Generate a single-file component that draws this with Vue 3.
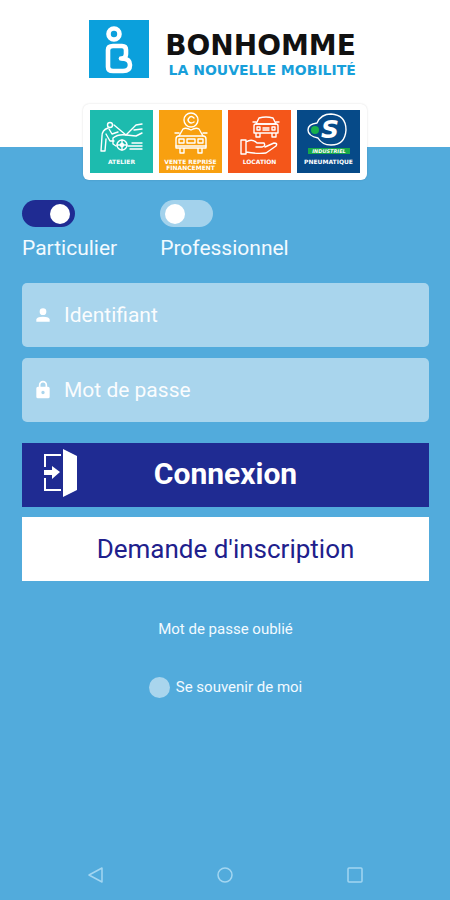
<template>
  <div class="page">
    <header class="header">
      <div class="brand">
        <svg class="brand-mark" viewBox="0 0 60 58" aria-hidden="true">
          <rect width="60" height="58" fill="#0ba0dc" />
          <g fill="none" stroke="#fff" stroke-width="4.600" stroke-linejoin="round" stroke-linecap="round">
            <circle cx="25" cy="14" r="5.500" />
            <path d="M24 26H33Q37 26 37 30V34Q37 37 34 38.500Q41 39 41 45Q41 51 34 51H24Q19 51 19 47V30Q19 26 24 26Z" />
            <path d="M32 38.500H34" />
          </g>
        </svg>
        <div class="brand-text">
          <span class="brand-name">BONHOMME</span>
          <span class="brand-tagline">LA NOUVELLE MOBILITÉ</span>
        </div>
      </div>
    </header>

    <div class="services">
      <div class="tile tile--atelier">
        <svg class="tile-icon" viewBox="0 0 63 49" aria-hidden="true">
          <g class="line">
            <circle cx="20" cy="15" r="2.500" />
            <path d="M18 18Q12 20 12 26L11 41H15L16 29M19 19L22 24L28 22M16 24L20 31H24" />
            <path d="M24 15L36 25L46 15L52 14M36 25L46 26L52 23M44 20L52 19" />
            <path d="M23 28Q28 24 36 25M23 28V34L26 36M38 36H52M42 33H52M40 39H52" />
            <circle cx="32" cy="35" r="5" />
            <circle cx="32" cy="35" r="1.500" />
            <path d="M32 30V40M27 35H37" />
          </g>
        </svg>
        <span class="tile-label">ATELIER</span>
      </div>

      <div class="tile tile--vente">
        <svg class="tile-icon" viewBox="0 0 63 49" aria-hidden="true">
          <g class="line">
            <circle cx="32" cy="10" r="7" />
            <path d="M35 8Q32 5 30 8Q28 10 30 12Q32 14 35 12" />
            <path d="M20 26L24 19Q27 17 32 20Q37 17 40 19L44 26M16 23H20M44 23H48" />
            <path d="M17 29Q17 26 20 26H44Q47 26 47 29V38H17ZM21 38V43H25V38M39 38V43H43V38" />
            <path d="M20 29H25V33H20ZM39 29H44V33H39ZM28 29H36V33H28ZM17 36H47" />
          </g>
        </svg>
        <span class="tile-label">VENTE REPRISE<br />FINANCEMENT</span>
      </div>

      <div class="tile tile--location">
        <svg class="tile-icon" viewBox="0 0 63 49" aria-hidden="true">
          <g class="line">
            <path d="M28 14L31 8Q38 6 45 8L48 14M25 12H28M48 12H51M28 14H48" />
            <path d="M26 16Q26 14 28 14H48Q50 14 50 16V23H26ZM28 23V27H32V23M44 23V27H48V23" />
            <path d="M29 17H32V20H29ZM44 17H47V20H44ZM35 18H41M35 20H41" />
            <path d="M13 30H18V44H13ZM18 32Q24 28 29 33H36Q38 36 34 37H28M37 37L46 33Q50 33 48 36L38 43Q29 44 18 42" />
          </g>
        </svg>
        <span class="tile-label">LOCATION</span>
      </div>

      <div class="tile tile--pneumatique">
        <svg class="tile-icon" viewBox="0 0 63 49" aria-hidden="true">
          <path
            class="line"
            d="M20 13Q24 4 34 4Q49 5 49 20Q48 35 34 35Q25 35 21 28Q11 26 11 20Q11 14 20 13Z"
          />
          <circle cx="18" cy="20" r="4" fill="#17b04b" />
          <text class="mark-letter" x="33" y="28" text-anchor="middle">S</text>
          <rect x="11" y="38" width="42" height="6" fill="#17a94a" />
          <text class="mark-caption" x="32" y="43" text-anchor="middle">INDUSTRIEL</text>
        </svg>
        <span class="tile-label">PNEUMATIQUE</span>
      </div>
    </div>

    <form class="form" @submit.prevent>
      <div class="profiles">
        <label v-for="item in profiles" :key="item.value" class="profile">
          <input
            v-model="profile"
            class="switch"
            type="radio"
            name="profile"
            :value="item.value"
          />
          <span>{{ item.label }}</span>
        </label>
      </div>

      <div class="fields">
        <label class="field">
          <svg class="field-icon" viewBox="0 0 24 24" aria-hidden="true">
            <circle cx="12" cy="8" r="4" />
            <path d="M4 20V17.500Q4 14 12 14T20 17.500V20Z" />
          </svg>
          <input v-model="login" type="text" placeholder="Identifiant" aria-label="Identifiant" />
        </label>
        <label class="field">
          <svg class="field-icon" viewBox="0 0 24 24" aria-hidden="true">
            <path
              fill-rule="evenodd"
              d="M18 8h-1V6A5 5 0 0 0 7 6v2H6a2 2 0 0 0-2 2v10a2 2 0 0 0 2 2h12a2 2 0 0 0 2-2V10a2 2 0 0 0-2-2zM9 6a3 3 0 0 1 6 0v2H9zM12 13a2 2 0 1 1 0 4a2 2 0 0 1 0-4z"
            />
          </svg>
          <input v-model="password" type="password" placeholder="Mot de passe" aria-label="Mot de passe" />
        </label>
      </div>

      <div class="actions">
        <button class="btn btn--primary" type="submit">
          <svg class="btn-icon" viewBox="0 0 36 48" aria-hidden="true">
            <path d="M19 6H3V18M3 29V41H19" fill="none" stroke="#fff" stroke-width="2" />
            <path d="M2 21H10V17L18 23L10 30V26H2Z" fill="#fff" />
            <path d="M21 0L35 7V41L21 48Z" fill="#fff" />
          </svg>
          Connexion
        </button>
        <button class="btn btn--secondary" type="button">Demande d'inscription</button>
      </div>

      <a class="forgot" href="#">Mot de passe oublié</a>

      <label class="remember">
        <input v-model="remember" type="checkbox" />
        <span>Se souvenir de moi</span>
      </label>
    </form>

    <nav class="system-bar">
      <button type="button" aria-label="Retour">
        <svg viewBox="0 0 18 18"><path d="M16 2V16L3 9Z" /></svg>
      </button>
      <button type="button" aria-label="Accueil">
        <svg viewBox="0 0 18 18"><circle cx="9" cy="9" r="7" /></svg>
      </button>
      <button type="button" aria-label="Applications">
        <svg viewBox="0 0 18 18"><rect x="2" y="2" width="14" height="14" rx="1" /></svg>
      </button>
    </nav>
  </div>
</template>

<script setup>
import { ref } from 'vue'

const profiles = [
  { value: 'particulier', label: 'Particulier' },
  { value: 'professionnel', label: 'Professionnel' }
]

const profile = ref('particulier')
const login = ref('')
const password = ref('')
const remember = ref(false)
</script>

<style>
body {
  margin: 0;
  background: #52abdc;
}
</style>

<style scoped>
.page {
  display: flex;
  flex-direction: column;
  min-height: 100vh;
  box-sizing: border-box;
  background: #52abdc;
  font-family: Roboto, 'Liberation Sans', sans-serif;
  color: #f2faff;
}

/* Logo */
.header {
  padding: 20px 0 65px;
  background: #fff;
}

.brand {
  display: flex;
  align-items: flex-start;
  justify-content: center;
  gap: 16px;
  padding-right: 5px;
}

.brand-mark {
  width: 60px;
  height: 58px;
}

.brand-text {
  display: flex;
  flex-direction: column;
  align-items: flex-end;
  padding-top: 14px;
  font-family: 'DejaVu Sans', sans-serif;
  font-weight: bold;
  white-space: nowrap;
}

.brand-name {
  font-size: 28px;
  line-height: 24px;
  color: #111;
}

.brand-tagline {
  font-size: 14px;
  line-height: 24px;
  color: #189fda;
}

/* Services */
.services {
  display: flex;
  align-self: center;
  gap: 6px;
  margin-top: -43px;
  padding: 6px 7px 7px;
  border-radius: 6px;
  background: #fff;
  box-shadow: 0 0 2px rgba(0, 0, 0, 0.15);
}

.tile {
  display: flex;
  flex-direction: column;
  align-items: center;
  width: 63px;
  height: 63px;
  overflow: hidden;
}

.tile--atelier {
  background: #1dbbae;
}

.tile--vente {
  background: #f8a010;
}

.tile--location {
  background: #f4561a;
}

.tile--pneumatique {
  background: #064a88;
}

.tile-icon {
  flex: none;
  width: 63px;
  height: 49px;
}

.line {
  fill: none;
  stroke: #fff;
  stroke-width: 1.4;
  stroke-linejoin: round;
  stroke-linecap: round;
}

.tile-label {
  font: bold 6px/6px 'DejaVu Sans', sans-serif;
  text-align: center;
  white-space: nowrap;
  color: #fff;
}

.mark-letter {
  font: italic bold 25px 'DejaVu Sans', sans-serif;
  fill: #fff;
}

.mark-caption {
  font: italic bold 5px 'DejaVu Sans', sans-serif;
  fill: #fff;
}

/* Formulaire */
.form {
  display: flex;
  flex-direction: column;
  padding: 20px 21px 0 22px;
}

.profiles {
  display: flex;
  gap: 43px;
}

.profile {
  display: flex;
  flex-direction: column;
  gap: 8px;
  font-size: 21px;
  line-height: 26px;
}

.switch {
  display: flex;
  align-items: center;
  appearance: none;
  width: 53px;
  height: 27px;
  box-sizing: border-box;
  margin: 0;
  padding: 0 5px;
  border-radius: 14px;
  background: #a3d2ec;
  cursor: pointer;
}

.switch::before {
  content: '';
  width: 20px;
  height: 20px;
  border-radius: 50%;
  background: #fff;
}

.switch:checked {
  justify-content: flex-end;
  background: #1f2b92;
}

.fields {
  display: flex;
  flex-direction: column;
  gap: 11px;
  margin-top: 22px;
}

.field {
  display: flex;
  align-items: center;
  gap: 11px;
  height: 64px;
  padding: 0 11px;
  border-radius: 5px;
  background: #a9d5ed;
}

.field-icon {
  flex: none;
  width: 20px;
  height: 20px;
  fill: #fff;
}

.field input {
  flex: 1;
  min-width: 0;
  padding: 0;
  border: 0;
  outline: 0;
  background: none;
  font: inherit;
  font-size: 21px;
  color: #fff;
}

.field input::placeholder {
  color: #fff;
  opacity: 0.95;
}

.actions {
  display: flex;
  flex-direction: column;
  gap: 10px;
  margin-top: 21px;
}

.btn {
  position: relative;
  height: 64px;
  padding: 0;
  border: 0;
  font-family: inherit;
  cursor: pointer;
}

.btn--primary {
  padding-bottom: 4px;
  background: #1f2b92;
  font-size: 30px;
  font-weight: bold;
  color: #fff;
}

.btn--secondary {
  background: #fff;
  font-size: 26px;
  color: #20208c;
}

.btn-icon {
  position: absolute;
  top: 6px;
  left: 20px;
  width: 36px;
  height: 48px;
}

.forgot,
.remember {
  align-self: center;
  font-size: 15px;
  line-height: 22px;
  color: #f2faff;
}

.forgot {
  margin-top: 37px;
  text-decoration: none;
}

.remember {
  display: flex;
  align-items: center;
  gap: 6px;
  margin-top: 36px;
}

.remember input {
  appearance: none;
  width: 21px;
  height: 21px;
  margin: 0;
  border-radius: 50%;
  background: #a9d5ed;
}

.remember input:checked {
  background: #1f2b92;
}

/* Barre de navigation */
.system-bar {
  display: grid;
  grid-template-columns: repeat(3, 1fr);
  margin-top: auto;
  padding: 0 30px 16px;
}

.system-bar button {
  display: flex;
  justify-content: center;
  padding: 0;
  border: 0;
  background: none;
}

.system-bar svg {
  width: 18px;
  height: 18px;
  fill: none;
  stroke: #a3d6f1;
  stroke-width: 1.5;
  stroke-linejoin: round;
}
</style>
